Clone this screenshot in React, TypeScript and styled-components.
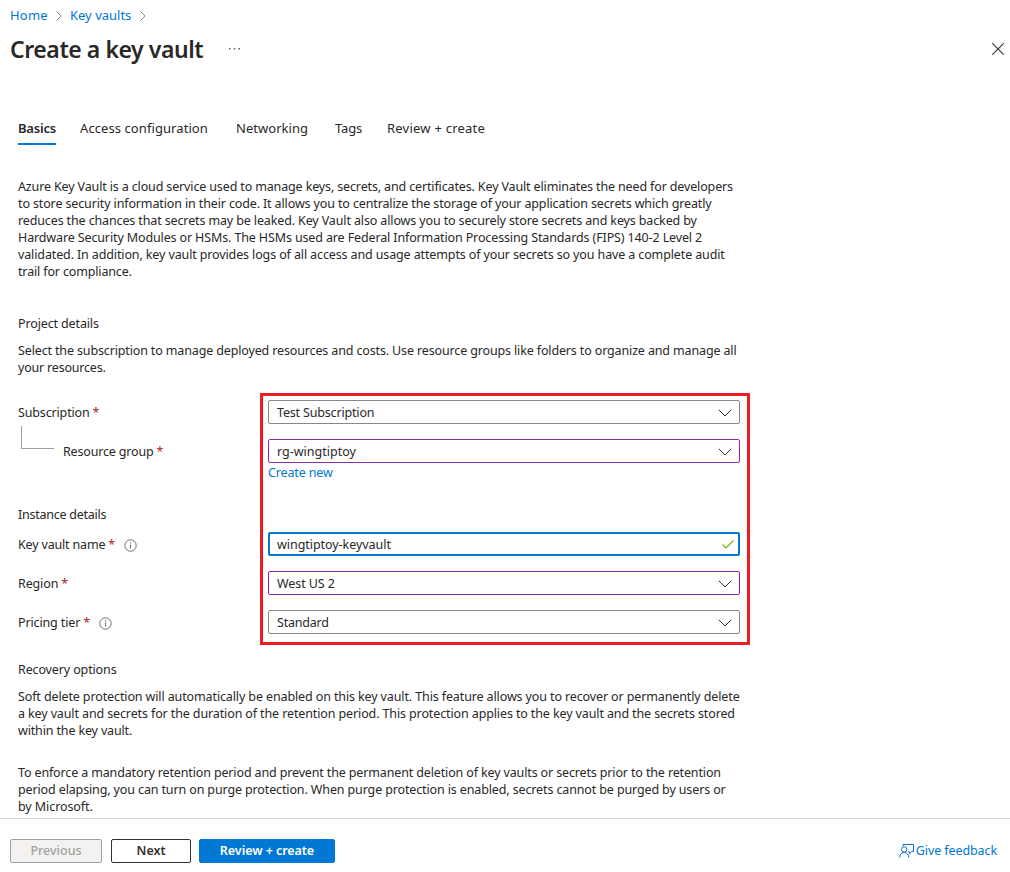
import React from "react";
import styled, { createGlobalStyle } from "styled-components";

const GlobalStyle = createGlobalStyle`
  * { box-sizing: border-box; }
  html, body { margin: 0; background: #fff; }
  body {
    font-family: "Noto Sans", "Open Sans", sans-serif;
    font-size: 12.5px;
    line-height: 17px;
    color: #292827;
    overflow: hidden;
  }
`;

const Page = styled.div`
  width: 1010px;
  height: 872px;
  display: flex;
  flex-direction: column;
`;

const Line = styled.span<{ $track?: number }>`
  display: block;
  width: max-content;
  white-space: nowrap;
  letter-spacing: ${(p) => p.$track ?? -0.13}px;
`;

const Breadcrumb = styled.nav`
  height: 31px;
  padding: 0 10px;
  display: flex;
  align-items: center;
  font-size: 13px;
`;

const Crumb = styled.a<{ $width: number }>`
  width: ${(p) => p.$width}px;
  color: #0078d4;
  white-space: nowrap;
`;

const CrumbArrow = styled.svg`
  width: 6px;
  height: 10px;
  margin: 1px 8px 0;
  fill: none;
  stroke: #8a8886;
`;

const TitleBar = styled.header`
  height: 36px;
  padding: 0 6px 0 10px;
  display: flex;
  align-items: center;
`;

const Title = styled.h1`
  margin: -1px 0 0;
  width: 219px;
  font-size: 23px;
  line-height: 32px;
  font-weight: 600;
  color: #292827;
`;

const MoreIcon = styled.svg`
  width: 11px;
  height: 2px;
  fill: #605e5c;
`;

const CloseIcon = styled.svg`
  width: 12px;
  height: 12px;
  margin-left: auto;
  fill: none;
  stroke: #323130;
  stroke-width: 1.1;
`;

const Tabs = styled.div`
  display: flex;
  height: 28px;
  margin: 50px 0 0 18px;
  font-size: 13px;
`;

const Tab = styled.div<{ $width: number; $gap: number; $active?: boolean }>`
  width: ${(p) => p.$width}px;
  margin-right: ${(p) => p.$gap}px;
  padding-top: 3px;
  font-weight: ${(p) => (p.$active ? 600 : 400)};
  border-bottom: 2px solid ${(p) => (p.$active ? "#0078d4" : "transparent")};
`;

const Content = styled.main`
  height: 673px;
  padding: 33px 0 0 18px;
  overflow: hidden;
`;

const Paragraph = styled.p<{ $top?: number }>`
  margin: ${(p) => p.$top ?? 0}px 0 0;
`;

const Heading = styled.h2<{ $top: number }>`
  margin: ${(p) => p.$top}px 0 0;
  font-size: 12.5px;
  line-height: 17px;
  font-weight: 400;
`;

const Form = styled.section`
  position: relative;
  width: 722px;
  margin-top: 24px;
`;

const Highlight = styled.div`
  position: absolute;
  left: 242px;
  top: -7px;
  width: 490px;
  height: 252px;
  border: 3px solid #ed1c24;
  pointer-events: none;
`;

const Row = styled.div<{ $top?: number }>`
  display: grid;
  grid-template-columns: 250px 472px;
  align-items: center;
  height: 24px;
  margin-top: ${(p) => p.$top ?? 0}px;
`;

const Label = styled.div`
  display: flex;
  align-items: center;
`;

const Required = styled.span`
  width: 7px;
  margin-left: 3px;
  color: #a4262c;
`;

const Branch = styled.span`
  width: 33px;
  height: 23px;
  margin: -27px 9px 0 3px;
  border: solid #a19f9d;
  border-width: 0 0 1px 1px;
`;

const Field = styled.div<{ $tone: "plain" | "edited" | "focused" }>`
  height: 24px;
  display: flex;
  align-items: center;
  justify-content: space-between;
  border-radius: 2px;
  border: ${(p) =>
    ({ plain: "1px solid #8a8886", edited: "1px solid #8a2da5", focused: "2px solid #0078d4" })[p.$tone]};
  padding: ${(p) => (p.$tone === "focused" ? "0 4px 0 7px" : "0 8px")};
`;

const ChevronSvg = styled.svg`
  width: 14px;
  height: 8px;
  margin: 1px -1px 0 0;
  fill: none;
  stroke: #323130;
`;

const CheckSvg = styled.svg`
  width: 12px;
  height: 9px;
  fill: none;
  stroke: #6bb700;
  stroke-width: 1.1;
`;

const InfoSvg = styled.svg`
  width: 13px;
  height: 13px;
  margin: 2px 0 0 9px;
  fill: none;
  stroke: #605e5c;
  stroke-width: 0.9;
`;

const CreateLink = styled.a`
  display: block;
  margin: 1px 0 0 250px;
  color: #0078d4;
`;

const Footer = styled.footer`
  height: 54px;
  border-top: 1px solid #d9d8d7;
  padding: 10px 13px 0 10px;
  display: flex;
  align-items: center;
`;

const Button = styled.button<{ $kind: "disabled" | "default" | "primary"; $width: number }>`
  width: ${(p) => p.$width}px;
  height: 24px;
  margin: 0 ${(p) => (p.$kind === "disabled" ? 9 : 8)}px 0 0;
  padding: 0;
  border-radius: 2px;
  font: 600 12.5px/17px "Noto Sans", sans-serif;
  display: flex;
  align-items: center;
  justify-content: center;
  ${(p) =>
    ({
      disabled: "color:#a19f9d;background:#f3f2f1;border:1px solid #a19f9d;font-weight:500;",
      default: "color:#323130;background:#fff;border:1px solid #323130;",
      primary: "color:#fff;background:#0078d4;border:1px solid #0078d4;",
    })[p.$kind]}
`;

const Feedback = styled.a`
  display: flex;
  align-items: center;
  margin-left: auto;
  color: #0078d4;
`;

const FeedbackIcon = styled.svg`
  width: 15px;
  height: 15px;
  margin-right: 2px;
  fill: none;
  stroke: #0f6cd4;
`;

const Arrow = () => (
  <CrumbArrow viewBox="0 0 6 10">
    <path d="M0.5 0.5 5 5 0.5 9.5" />
  </CrumbArrow>
);

const Chevron = () => (
  <ChevronSvg viewBox="0 0 14 8">
    <path d="M0.7 0.7 7 7 13.3 0.7" />
  </ChevronSvg>
);

const Info = () => (
  <InfoSvg viewBox="0 0 13 13">
    <circle cx="6.5" cy="6.5" r="5.7" />
    <path d="M6.5 5.5v4M6.5 3.2v1.2" />
  </InfoSvg>
);

type Text = [string, number];

const intro: Text[] = [
  ["Azure Key Vault is a cloud service used to manage keys, secrets, and certificates. Key Vault eliminates the need for developers", -0.14],
  ["to store security information in their code. It allows you to centralize the storage of your application secrets which greatly", -0.13],
  ["reduces the chances that secrets may be leaked. Key Vault also allows you to securely store secrets and keys backed by", -0.13],
  ["Hardware Security Modules or HSMs. The HSMs used are Federal Information Processing Standards (FIPS) 140-2 Level 2", -0.13],
  ["validated. In addition, key vault provides logs of all access and usage attempts of your secrets so you have a complete audit", -0.125],
  ["trail for compliance.", -0.15],
];
const project: Text[] = [
  ["Select the subscription to manage deployed resources and costs. Use resource groups like folders to organize and manage all", -0.14],
  ["your resources.", -0.2],
];
const softDelete: Text[] = [
  ["Soft delete protection will automatically be enabled on this key vault. This feature allows you to recover or permanently delete", -0.12],
  ["a key vault and secrets for the duration of the retention period. This protection applies to the key vault and the secrets stored", -0.12],
  ["within the key vault.", -0.15],
];
const purge: Text[] = [
  ["To enforce a mandatory retention period and prevent the permanent deletion of key vaults or secrets prior to the retention", -0.14],
  ["period elapsing, you can turn on purge protection. When purge protection is enabled, secrets cannot be purged by users or", -0.13],
  ["by Microsoft.", -0.08],
];

const Lines = ({ items, top }: { items: Text[]; top?: number }) => (
  <Paragraph $top={top}>
    {items.map(([text, track]) => (
      <Line key={text} $track={track}>{text}</Line>
    ))}
  </Paragraph>
);

export default function App() {
  return (
    <Page>
      <GlobalStyle />
      <Breadcrumb>
        <Crumb $width={38}><Line $track={0.2}>Home</Line></Crumb>
        <Arrow />
        <Crumb $width={62}><Line $track={0}>Key vaults</Line></Crumb>
        <Arrow />
      </Breadcrumb>
      <TitleBar>
        <Title><Line $track={-0.43}>Create a key vault</Line></Title>
        <MoreIcon viewBox="0 0 11 2">
          <rect width="1.5" height="1.5" />
          <rect x="4.75" width="1.5" height="1.5" />
          <rect x="9.5" width="1.5" height="1.5" />
        </MoreIcon>
        <CloseIcon viewBox="0 0 12 12">
          <path d="M0.3 0.3 11.7 11.7M11.7 0.3 0.3 11.7" />
        </CloseIcon>
      </TitleBar>
      <Tabs>
        <Tab $width={38} $gap={24} $active><Line $track={-0.2}>Basics</Line></Tab>
        <Tab $width={128} $gap={28}><Line $track={0.08}>Access configuration</Line></Tab>
        <Tab $width={72} $gap={27}><Line $track={0.03}>Networking</Line></Tab>
        <Tab $width={27} $gap={25}><Line $track={-0.15}>Tags</Line></Tab>
        <Tab $width={98} $gap={0}><Line $track={0.23}>Review + create</Line></Tab>
      </Tabs>
      <Content>
        <Lines items={intro} />
        <Heading $top={35}><Line>Project details</Line></Heading>
        <Lines items={project} top={10} />
        <Form>
          <Row>
            <Label><Line $track={-0.15}>Subscription</Line><Required>*</Required></Label>
            <Field $tone="plain"><Line $track={-0.17}>Test Subscription</Line><Chevron /></Field>
          </Row>
          <Row $top={15}>
            <Label><Branch /><Line $track={-0.17}>Resource group</Line><Required>*</Required></Label>
            <Field $tone="edited"><Line $track={0}>rg-wingtiptoy</Line><Chevron /></Field>
          </Row>
          <CreateLink><Line>Create new</Line></CreateLink>
          <Heading $top={25}><Line $track={-0.25}>Instance details</Line></Heading>
          <Row $top={9}>
            <Label><Line $track={-0.17}>Key vault name</Line><Required>*</Required><Info /></Label>
            <Field $tone="focused">
              <Line $track={-0.05}>wingtiptoy-keyvault</Line>
              <CheckSvg viewBox="0 0 12 9"><path d="M0.5 4.5 4 8 11.5 0.5" /></CheckSvg>
            </Field>
          </Row>
          <Row $top={15}>
            <Label><Line>Region</Line><Required>*</Required></Label>
            <Field $tone="edited"><Line $track={-0.08}>West US 2</Line><Chevron /></Field>
          </Row>
          <Row $top={15}>
            <Label><Line>Pricing tier</Line><Required>*</Required><Info /></Label>
            <Field $tone="plain"><Line $track={-0.2}>Standard</Line><Chevron /></Field>
          </Row>
          <Highlight />
        </Form>
        <Heading $top={27}><Line>Recovery options</Line></Heading>
        <Lines items={softDelete} top={10} />
        <Lines items={purge} top={25} />
      </Content>
      <Footer>
        <Button $kind="disabled" $width={92}><Line $track={0}>Previous</Line></Button>
        <Button $kind="default" $width={80}><Line $track={0}>Next</Line></Button>
        <Button $kind="primary" $width={136}><Line $track={-0.05}>Review + create</Line></Button>
        <Feedback>
          <FeedbackIcon viewBox="0 0 15 15">
            <path d="M4 3V1.5h10.5v7h-2l-2.2 2.2V8.5H9.5" />
            <circle cx="5.2" cy="6.4" r="2.7" />
            <path d="M0.6 14.5c.3-3.200 2-5 4.600-5s4.300 1.800 4.600 5" />
          </FeedbackIcon>
          <Line $track={-0.1}>Give feedback</Line>
        </Feedback>
      </Footer>
    </Page>
  );
}
